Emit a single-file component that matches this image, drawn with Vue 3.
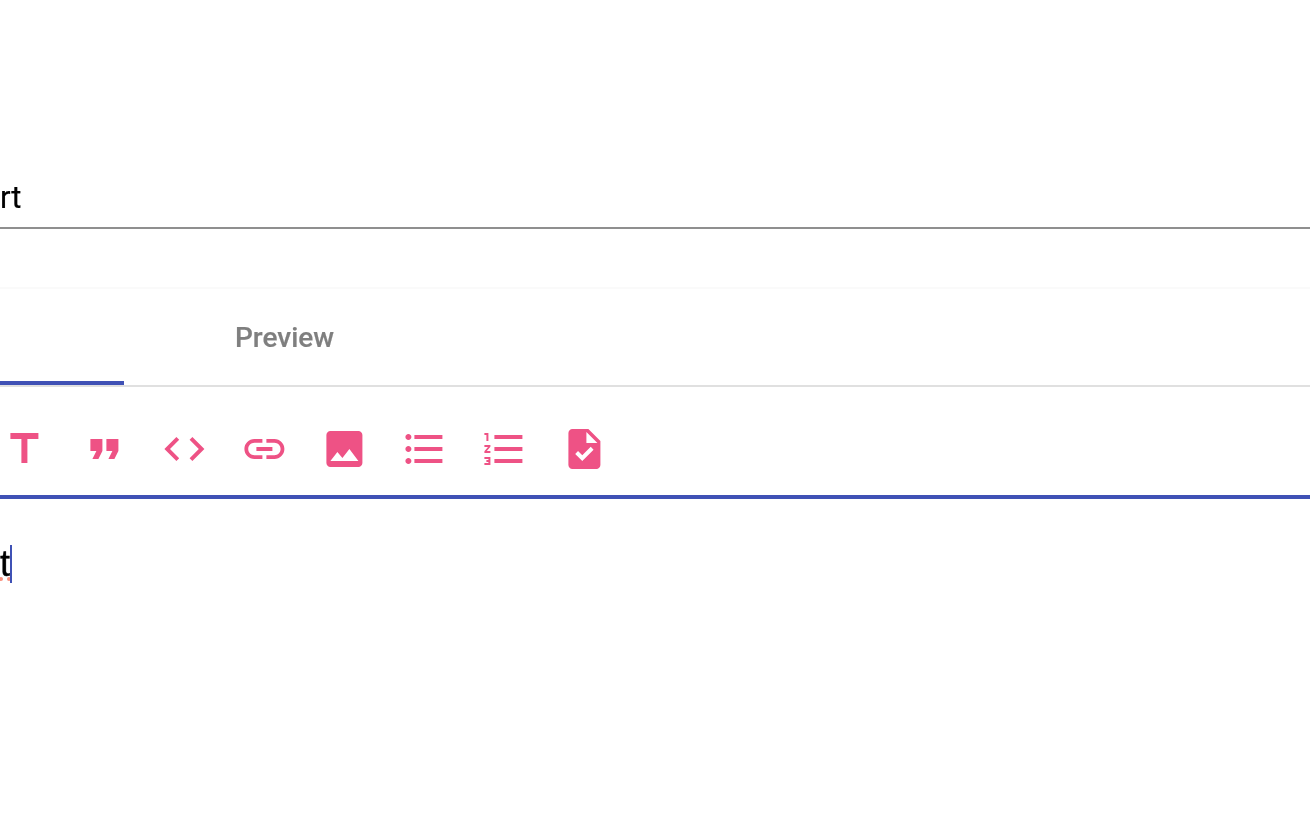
<template>
  <div class="page">
    <div class="title-field">
      <span class="title-text">rt</span>
    </div>

    <div class="editor">
      <div class="tabs">
        <div class="tab active"></div>
        <div class="tab"><span class="tab-label">Preview</span></div>
      </div>

      <div class="toolbar">
        <svg v-for="icon in icons" :key="icon" class="tool" viewBox="-0.2 0 24 24">
          <path :d="icon" />
        </svg>
      </div>

      <div class="content">
        <span class="typed">t</span>
        <span class="spell"><i></i><i></i></span>
        <span class="caret"></span>
      </div>
    </div>
  </div>
</template>

<script setup>
const icons = [
  'M5 4v3h5.5v12h3V7H19V4z',
  'M6 17h3l2-4V7H5v6h3zm8 0h3l2-4V7h-6v6h3z',
  'M9.4 16.6L4.8 12l4.6-4.6L8 6l-6 6 6 6 1.4-1.4zm5.2 0l4.6-4.6-4.6-4.6L16 6l6 6-6 6-1.4-1.4z',
  'M3.9 12c0-1.71 1.39-3.1 3.1-3.1h4V7H7c-2.76 0-5 2.24-5 5s2.24 5 5 5h4v-1.9H7c-1.71 0-3.1-1.39-3.1-3.1zM8 13h8v-2H8v2zm9-6h-4v1.9h4c1.71 0 3.1 1.39 3.1 3.1s-1.39 3.1-3.1 3.1h-4V17h4c2.76 0 5-2.24 5-5s-2.24-5-5-5z',
  'M21 19V5c0-1.1-.9-2-2-2H5c-1.1 0-2 .9-2 2v14c0 1.1.9 2 2 2h14c1.1 0 2-.9 2-2zM8.5 13.5l2.5 3.01L14.5 12l4.5 6H5l3.5-4.5z',
  'M4 10.5c-.83 0-1.5.67-1.5 1.5s.67 1.5 1.5 1.5 1.5-.67 1.5-1.5-.67-1.5-1.5-1.5zm0-6c-.83 0-1.5.67-1.5 1.5S3.17 7.5 4 7.5 5.5 6.83 5.5 6 4.83 4.5 4 4.5zm0 12c-.83 0-1.5.68-1.5 1.5s.68 1.5 1.5 1.5 1.5-.68 1.5-1.5-.67-1.5-1.5-1.5zM7 19h14v-2H7v2zm0-6h14v-2H7v2zm0-8v2h14V5H7z',
  'M2 17h2v.5H3v1h1v.5H2v1h3v-4H2v1zm1-9h1V4H2v1h1v3zm-1 3h1.8L2 13.1v.9h3v-1H3.2L5 10.9V10H2v1zm5-6v2h14V5H7zm0 14h14v-2H7v2zm0-6h14v-2H7v2z',
  'M14 2H6c-1.1 0-1.99.9-1.99 2L4 20c0 1.1.89 2 1.99 2H18c1.1 0 2-.9 2-2V8l-6-6zm-3.06 16L7.4 14.46l1.41-1.41 2.12 2.12 4.24-4.24 1.41 1.41L10.94 18zM13 9V3.5L18.5 9H13z'
]
</script>

<style>
html, body {
  background: #fff;
  overflow: hidden;
}
</style>

<style scoped>
.page {
  width: 1310px;
  height: 814px;
  overflow: hidden;
  background: #fff;
  font-family: Roboto, "Liberation Sans", sans-serif;
}

.title-field {
  height: 229px;
  box-sizing: border-box;
  padding-bottom: 11px;
  display: flex;
  align-items: flex-end;
  border-bottom: 2px solid #8f8f8f;
}

.title-text {
  font-size: 31px;
  line-height: 36px;
  color: #000;
  -webkit-text-stroke: 0.2px #000;
  will-change: transform;
}

.editor {
  margin-top: 58px;
  border-top: 2px solid #fafafa;
}

.tabs {
  display: flex;
  height: 98px;
  box-sizing: border-box;
  border-bottom: 2px solid #e0e0e0;
}

.tab {
  width: 320px;
  box-sizing: border-box;
  padding-left: 2px;
  display: flex;
  align-items: center;
  justify-content: center;
}

.tab-label {
  font-size: 28px;
  font-weight: 500;
  color: #7f7f7f;
  -webkit-text-stroke: 0.2px #7f7f7f;
  will-change: transform;
}

.tab.active {
  width: 124px;
  border-bottom: 4px solid #3f51b5;
}

.toolbar {
  display: flex;
  gap: 32px;
  height: 112px;
  box-sizing: border-box;
  padding-top: 38px;
  border-bottom: 4px solid #3f51b5;
}

.tool {
  width: 48px;
  height: 48px;
  fill: #ee5285;
}

.content {
  position: relative;
  height: 90px;
}

.typed {
  position: absolute;
  left: 0;
  top: 45px;
  font-family: "Liberation Sans", Arial, sans-serif;
  font-size: 36px;
  line-height: 40px;
  color: #000;
  -webkit-text-stroke: 0.4px #000;
  will-change: transform;
}

.caret {
  position: absolute;
  left: 10px;
  top: 46px;
  width: 2px;
  height: 38px;
  background: #3f51b5;
}

.spell {
  position: absolute;
  left: -1px;
  top: 78px;
  display: flex;
  gap: 4px;
}

.spell i {
  width: 4px;
  height: 4px;
  border-radius: 50%;
  background: #f8917f;
}
</style>
